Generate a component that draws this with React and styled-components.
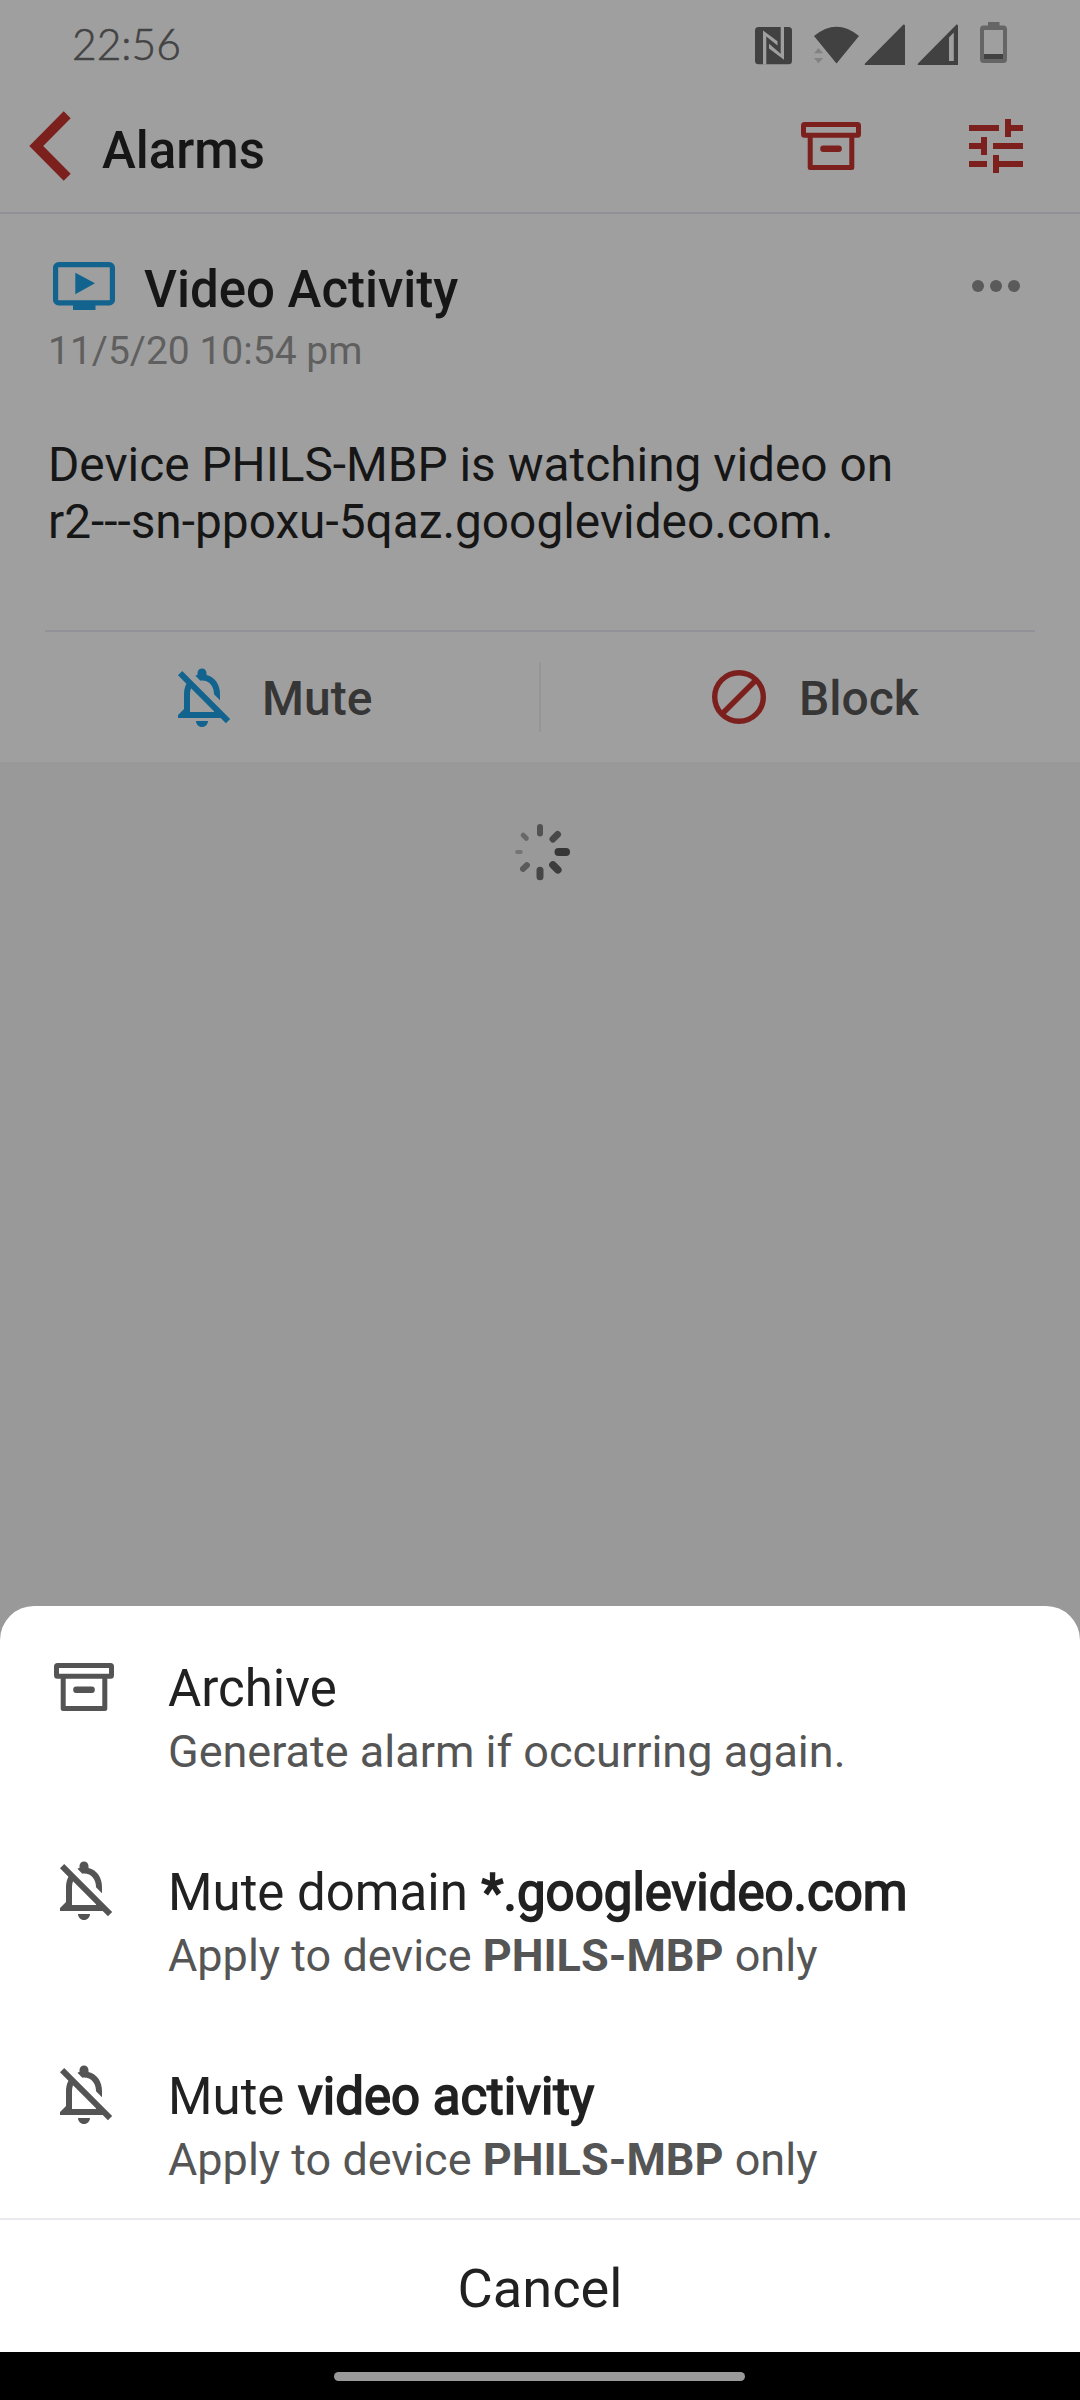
import React from 'react'
import styled, { createGlobalStyle } from 'styled-components'

const RED = '#7c201e'
const BLUE = '#12648f'

const GlobalStyle = createGlobalStyle`
  *{box-sizing:border-box}
  body{margin:0;background:#999;font-family:Roboto,"Liberation Sans",sans-serif}
  svg{display:block;flex:none}
`
const Screen = styled.div`width:1080px;height:2400px;display:flex;flex-direction:column;background:#999999;overflow:hidden`

const StatusBar = styled.div`height:80px;padding:0 73px 0 72px;display:flex;align-items:center;justify-content:space-between;background:#9f9f9f`
const Clock = styled.span`font-family:Lato,sans-serif;font-size:42.5px;font-weight:300;-webkit-text-stroke:.6px currentColor;line-height:50px;padding-top:8px;color:#434343`
const StatusIcons = styled.svg`margin-top:8px`

const Header = styled.header`height:134px;padding:0 48px 0 29px;display:flex;align-items:center;background:#9f9f9f;border-bottom:2px solid #909196`
const HeaderTitle = styled.h1`flex:1;margin:0;padding:9px 0 0 31px;font-size:51px;line-height:60px;font-weight:500;color:#161616`
const HeaderActions = styled.div`display:flex;gap:93px`

const Card = styled.article`height:548px;background:#9f9f9f;color:#161616;display:flex;flex-direction:column`
const CardHead = styled.div`display:flex;align-items:flex-start;padding:45px 60px 0 53px`
const CardIcon = styled.svg`margin-top:3px`
const CardTitle = styled.h2`flex:1;margin:0;padding:1px 0 0 29px;font-size:51px;line-height:60px;font-weight:500`
const Dots = styled.svg`margin-top:21px`
const CardDate = styled.time`padding:7px 48px 0;font-size:39px;line-height:48px;color:#5f5f5f`
const CardText = styled.p`margin:62px 0 0;padding:0 48px;font-size:47.8px;line-height:57px;height:193px;white-space:pre-line`
const CardActions = styled.div`flex:1;margin:0 45px;border-top:2px solid #919197;display:grid;grid-template-columns:494px 2px 1fr;align-items:center`
const ActionButton = styled.div`display:flex;align-items:center;padding-left:${p=>p.$left}px;font-size:48px;font-weight:500;line-height:56px;color:#363636`
const ActionLabel = styled.span`padding:4px 0 0 24px`
const ActionDivider = styled.div`height:70px;background:#96969a`

const Loading = styled.div`flex:1;padding-top:60px;display:flex;justify-content:center;align-items:flex-start`

const Sheet = styled.section`background:#fff;border-radius:34px 34px 0 0;color:#212121`
const SheetRow = styled.div`height:204px;display:grid;grid-template-columns:72px 1fr;column-gap:48px;padding-left:48px`
const SheetIcon = styled.div`padding-top:${p=>p.$top}px;color:#545454`
const SheetBody = styled.div`padding-top:53px`
const SheetTitle = styled.div`font-size:51px;line-height:60px;b{margin-left:1px;font-weight:400;-webkit-text-stroke:1.7px currentColor}`
const SheetNote = styled.div`margin-top:6px;font-size:45px;line-height:54px;color:#555;b{font-weight:700}`
const Cancel = styled.div`height:134px;border-top:2px solid #e8eaee;display:flex;align-items:center;justify-content:center;font-size:54.2px;line-height:64px;padding-top:6px`

const NavBar = styled.div`height:48px;background:#000;display:flex;justify-content:center;padding:20px 1px 0 0`
const NavHandle = styled.div`width:411px;height:9px;border-radius:5px;background:#999`

const Back = () => (
  <svg width="42" height="70" viewBox="29 111 42 70"><path fill={RED} d="M63.7 111.3 70.7 118.3 43.2 146 70.7 173.7 63.7 180.7 29.3 146Z"/></svg>
)
const ArchiveIcon = ({color='currentColor'}) => (
  <svg width="72" height="72" viewBox="0 0 72 72" fill="none" stroke={color} strokeWidth="5" strokeLinejoin="round">
    <rect x="8.5" y="14.5" width="55" height="10.8" rx="1"/>
    <path d="M15.2 26V57.4H56.8V26"/>
    <rect x="25.2" y="35.5" width="21.6" height="6.6" rx="3" fill={color} stroke="none"/>
  </svg>
)
const TuneIcon = () => (
  <svg width="72" height="72" viewBox="0 0 24 24"><path fill={RED} d="M3 17v2h6v-2H3zM3 5v2h10V5H3zm10 16v-2h8v-2h-8v-2h-2v6h2zM7 9v2H3v2h4v2h2V9H7zm14 4v-2H11v2h10zm-6-4h2V7h4V5h-4V3h-2v6z"/></svg>
)
const BellOff = ({color='currentColor'}) => (
  <svg width="72" height="72" viewBox="0 0 24 24"><path fill={color} d="M12 22c1.1 0 2-.9 2-2h-4c0 1.1.9 2 2 2zm0-15.5c2.49 0 4 2.02 4 4.5v.1l2 2V11c0-3.07-1.63-5.64-4.5-6.32V4c0-.83-.67-1.5-1.5-1.5s-1.5.67-1.5 1.5v.68c-.24.06-.47.15-.69.23l1.64 1.64c.18-.02.36-.05.55-.05zM5.41 3.35L4 4.76l2.81 2.81C6.29 8.57 6 9.74 6 11v5l-2 2v1h14.24l1.74 1.74 1.41-1.41L5.41 3.35zM16 17H8v-6c0-.68.12-1.32.34-1.9L16 16.76V17z"/></svg>
)
const BlockIcon = () => (
  <svg width="72" height="72" viewBox="0 0 72 72" fill="none" stroke={RED} strokeWidth="5.4"><circle cx="36" cy="36" r="24.3"/><path d="M19 53 53 19"/></svg>
)

// nfc, wifi, two sims and the battery share one strip
const SystemIcons = () => (
  <StatusIcons width="253" height="44" viewBox="754 23 253 44" fill="#414141">
    <rect x="755" y="28" width="37" height="37.3" rx="3.5"/>
    <path fill="#9f9f9f" d="M763 65.5V31.5L777.5 42.2V46.5L766.3 37.5V65.5ZM784 28V60.8L769 49.5V44.8L780.7 54.8V28Z"/>
    <path d="M814 37Q836.5 18.5 859 37L836.5 64.5Z"/>
    <path fill="#828282" d="M818.5 49 823 54.3H814ZM814 59H823L818.5 64.3Z"/>
    <path d="M903.5 25.5Q905 25 905 27V66H866Q864 66 865 64.5Z"/>
    <path fillRule="evenodd" d="M956.5 25.5Q958 25 958 27V66H919Q917 66 918 64.5ZM949 38.5V62H953.8V33.5Z"/>
    <path fill="#656565" fillRule="evenodd" d="M988 23H999.5V26.5H1003.5Q1007 26.5 1007 30.5V60Q1007 64 1003.5 64H983.5Q980 64 980 60V30.5Q980 26.5 983.5 26.5H988ZM984 31V60H1003V31Z"/>
    <path d="M984 55H1003V60H984Z"/>
  </StatusIcons>
)

// angle, distance from centre, length, thickness, shade
const ticks = [
  [0,14.5,15.5,8,'#363636'],
  [45,14.5,14.5,7.5,'#3c3c3c'],
  [90,14.8,13.5,7,'#464646'],
  [135,15.5,11.5,6,'#5a5a5a'],
  [180,17.3,7.5,4,'#757575'],
  [225,16.8,9.5,5,'#686868'],
  [270,15.5,12.5,6,'#525252'],
  [315,14.8,13.5,6.8,'#484848'],
]
const Spinner = () => (
  <svg width="60" height="60" viewBox="-30 -30 60 60">
    {ticks.map(([a,d,l,t,c])=><rect key={a} x={d} y={-t/2} width={l} height={t} rx={t/2} fill={c} transform={`rotate(${a})`}/>)}
  </svg>
)

const options = [
  {icon:<ArchiveIcon/>,top:45,title:'Archive',note:'Generate alarm if occurring again.'},
  {icon:<BellOff/>,top:43.5,title:<>Mute domain <b>*.googlevideo.com</b></>,note:<>Apply to device <b>PHILS-MBP</b> only</>},
  {icon:<BellOff/>,top:43.5,title:<>Mute <b>video activity</b></>,note:<>Apply to device <b>PHILS-MBP</b> only</>},
]

export default function App(){
  return (
    <Screen>
      <GlobalStyle/>
      <StatusBar><Clock>22:56</Clock><SystemIcons/></StatusBar>
      <Header>
        <Back/>
        <HeaderTitle>Alarms</HeaderTitle>
        <HeaderActions><ArchiveIcon color={RED}/><TuneIcon/></HeaderActions>
      </Header>
      <Card>
        <CardHead>
          <CardIcon width="62" height="48" viewBox="0 0 62 48" fill={BLUE}>
            <rect x="2.6" y="2.6" width="56.8" height="38.3" rx="3" fill="none" stroke={BLUE} strokeWidth="5.2"/>
            <path d="M20 42H42.5V48H20ZM22.3 10.7 42 21.3 22.3 32.2Z"/>
          </CardIcon>
          <CardTitle>Video Activity</CardTitle>
          <Dots width="48" height="12" viewBox="0 0 48 12" fill="#5a5a5a"><circle cx="6" cy="6" r="6"/><circle cx="24" cy="6" r="6"/><circle cx="42" cy="6" r="6"/></Dots>
        </CardHead>
        <CardDate>11/5/20 10:54 pm</CardDate>
        <CardText>{'Device PHILS-MBP is watching video on\nr2---sn-ppoxu-5qaz.googlevideo.com.'}</CardText>
        <CardActions>
          <ActionButton $left={121}><BellOff color={BLUE}/><ActionLabel>Mute</ActionLabel></ActionButton>
          <ActionDivider/>
          <ActionButton $left={162}><BlockIcon/><ActionLabel>Block</ActionLabel></ActionButton>
        </CardActions>
      </Card>
      <Loading><Spinner/></Loading>
      <Sheet>
        {options.map((o,i)=>(
          <SheetRow key={i}>
            <SheetIcon $top={o.top}>{o.icon}</SheetIcon>
            <SheetBody><SheetTitle>{o.title}</SheetTitle><SheetNote>{o.note}</SheetNote></SheetBody>
          </SheetRow>
        ))}
        <Cancel>Cancel</Cancel>
      </Sheet>
      <NavBar><NavHandle/></NavBar>
    </Screen>
  )
}
